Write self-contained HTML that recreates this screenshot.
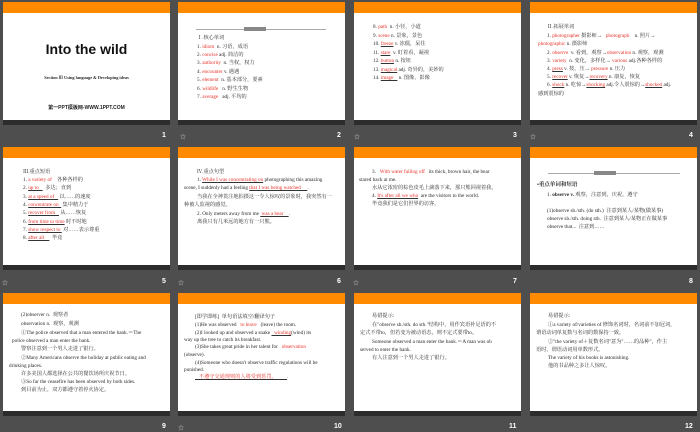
<!DOCTYPE html>
<html><head><meta charset="utf-8"><style>
*{margin:0;padding:0;box-sizing:border-box}
body{width:700px;height:430px;background:#4e4e4e;position:relative;overflow:hidden;font-family:"Liberation Serif","Noto Serif CJK SC",serif;}
.s{position:absolute;width:167px;height:123px;background:#fff;overflow:hidden}
.s .o{position:absolute;left:0;top:0;width:100%;height:11px;background:#ff8a00}
.s .d{position:absolute;left:0;bottom:0;width:100%;height:5px;background:#2c2c2c}
.l{position:absolute;font-size:5.2px;line-height:6px;color:#2a2a2a;white-space:nowrap}
.r{color:#e8332a}
.u{color:#e8332a;text-decoration:underline;text-decoration-color:#333}
.n{position:absolute;color:#fff;font:bold 7px "Liberation Sans",sans-serif}
.ic{position:absolute;color:#ccc;font-size:6px}
.hd{position:absolute;height:1px;background:#aaa}
.hb{position:absolute;height:4px;width:22px;background:#888}
</style></head><body>

<!-- Slide 1 -->
<div class="s" style="left:3px;top:2px"><div class="o"></div><div class="d"></div>
<div class="l" style="left:0;width:167px;text-align:center;top:39px;font:bold 14px/16px 'Liberation Sans',sans-serif;color:#111">Into the wild</div>
<div class="l" style="left:0;width:167px;text-align:center;top:73px;font-weight:bold;font-size:4.3px">Section Ⅲ Using language &amp; Developing ideas</div>
<div class="l" style="left:0;width:167px;text-align:center;top:102px;font:bold 5px 'Liberation Sans','Noto Sans CJK SC',sans-serif;color:#222">第一PPT模板网-WWW.1PPT.COM</div>
</div>
<div class="n" style="left:162px;top:132px">1</div>

<!-- Slide 2 -->
<div class="s" style="left:178px;top:2px"><div class="o"></div><div class="d"></div>
<div class="hd" style="left:18px;top:27px;width:130px"></div><div class="hb" style="left:66px;top:25px"></div>
<div class="l" style="left:19px;top:33px">Ⅰ.核心单词</div>
<div class="l" style="left:19px;top:42px">1. <span class="r">idiom</span> &nbsp;n. 习语，成语</div>
<div class="l" style="left:19px;top:50px">2. <span class="r">concise</span> adj. 简洁的</div>
<div class="l" style="left:19px;top:58px">3. <span class="r">authority</span> &nbsp;n. 当权，权力</div>
<div class="l" style="left:19px;top:67px">4. <span class="r">encounter</span> v. 遇遇</div>
<div class="l" style="left:19px;top:75px">5. <span class="r">element</span> &nbsp;n. 基本部分，要素</div>
<div class="l" style="left:19px;top:84px">6. <span class="r">wildlife</span> &nbsp;&nbsp;n. 野生生物</div>
<div class="l" style="left:19px;top:92px">7. <span class="r">average</span> &nbsp;&nbsp;adj. 平均的</div>
</div>
<div class="ic" style="left:180px;top:132px">☆</div><div class="n" style="left:337px;top:132px">2</div>

<!-- Slide 3 -->
<div class="s" style="left:354px;top:2px"><div class="o"></div><div class="d"></div>
<div class="l" style="left:19px;top:22px">8. <span class="r">path</span> &nbsp;n. 小径，小道</div>
<div class="l" style="left:19px;top:31px">9. <span class="r">scene</span> n. 景象，景色</div>
<div class="l" style="left:19px;top:39px">10. <span class="u">freeze</span> v. 冻僵，呆住</div>
<div class="l" style="left:19px;top:48px">11. <span class="u">stare</span> &nbsp;v. 盯着看，凝视</div>
<div class="l" style="left:19px;top:56px">12. <span class="u">button</span> n. 按钮</div>
<div class="l" style="left:19px;top:65px">13. <span class="u">magical</span> adj. 奇异的，美妙的</div>
<div class="l" style="left:19px;top:73px">14. <span class="u">image&nbsp;&nbsp;&nbsp;</span> n. 图像，影像</div>
</div>
<div class="ic" style="left:354px;top:132px">☆</div><div class="n" style="left:513px;top:132px">3</div>

<!-- Slide 4 -->
<div class="s" style="left:530px;top:2px"><div class="o"></div><div class="d"></div>
<div class="l" style="left:17px;top:22px">Ⅱ.拓展单词</div>
<div class="l" style="left:17px;top:31px">1. <span class="r">photographer</span> 摄影师→ &nbsp;&nbsp;<span class="r">photograph</span> &nbsp;&nbsp;&nbsp;n. 照片→</div>
<div class="l" style="left:8px;top:39px"><span class="r">photographic</span> n. 摄影师</div>
<div class="l" style="left:17px;top:48px">2. <span class="r">observe</span> &nbsp;v. 看到，观察→<span class="r">observation</span> n. 观察，观测</div>
<div class="l" style="left:17px;top:56px">3. <span class="r">variety</span> &nbsp;n. 变化，多样化→ <span class="r">various</span> adj.各种各样的</div>
<div class="l" style="left:17px;top:64px">4. <span class="u">press</span> v. 按，压→ <span class="r">pressure</span> n. 压力</div>
<div class="l" style="left:17px;top:72px">5. <span class="u">recover</span> v. 恢复→<span class="u">recovery</span> n. 康复，恢复</div>
<div class="l" style="left:17px;top:80px">6. <span class="u">shock</span> n. 吃惊→<span class="u">shocking</span> adj.令人震惊的→<span class="u">shocked</span> adj.</div>
<div class="l" style="left:8px;top:89px">感到震惊的</div>
</div>
<div class="ic" style="left:530px;top:132px">☆</div><div class="n" style="left:689px;top:132px">4</div>

<!-- Slide 5 -->
<div class="s" style="left:3px;top:147px"><div class="o"></div><div class="d"></div>
<div class="l" style="left:20px;top:22px">Ⅲ.重点短语</div>
<div class="l" style="left:20px;top:30px">1. <span class="r">a variety of</span> &nbsp;&nbsp;&nbsp;各种各样的</div>
<div class="l" style="left:20px;top:38px">2. <span class="u">up to&nbsp;&nbsp;&nbsp;</span> &nbsp;多达；直到</div>
<div class="l" style="left:20px;top:47px">3. <span class="u">at a speed of&nbsp;&nbsp;&nbsp;</span> 以……的速度</div>
<div class="l" style="left:20px;top:55px">4. <span class="u">concentrate on&nbsp;&nbsp;</span> 集中精力于</div>
<div class="l" style="left:20px;top:63px">5. <span class="u">recover from&nbsp;&nbsp;&nbsp;</span> 从……恢复</div>
<div class="l" style="left:20px;top:72px">6. <span class="u">from time to time</span> 时不时地</div>
<div class="l" style="left:20px;top:80px">7. <span class="u">show respect to&nbsp;</span> 对……表示尊重</div>
<div class="l" style="left:20px;top:88px">8. <span class="u">after all&nbsp;&nbsp;&nbsp;&nbsp;</span> &nbsp;毕竟</div>
</div>
<div class="ic" style="left:2px;top:278px">☆</div><div class="n" style="left:162px;top:278px">5</div>

<!-- Slide 6 -->
<div class="s" style="left:178px;top:147px"><div class="o"></div><div class="d"></div>
<div class="l" style="left:19px;top:22px">Ⅳ.重点句型</div>
<div class="l" style="left:19px;top:30px">1. <span class="u">While I was concentrating on</span> photographing this amazing</div>
<div class="l" style="left:6px;top:38px">scene, I suddenly had a feeling <span class="u">that I was being watched&nbsp;&nbsp;&nbsp;&nbsp;&nbsp;</span>.</div>
<div class="l" style="left:19px;top:47px">当我在全神贯注地拍摄这一令人惊叹的景象时，我突然有一</div>
<div class="l" style="left:6px;top:55px">种被人监视的感觉。</div>
<div class="l" style="left:19px;top:64px">2. Only meters away from me <span class="u">&nbsp;was a bear&nbsp;&nbsp;&nbsp;&nbsp;</span>.</div>
<div class="l" style="left:19px;top:72px">离我只有几米远的地方有一只熊。</div>
</div>
<div class="ic" style="left:178px;top:278px">☆</div><div class="n" style="left:337px;top:278px">6</div>

<!-- Slide 7 -->
<div class="s" style="left:354px;top:147px"><div class="o"></div><div class="d"></div>
<div class="l" style="left:18px;top:22px">3. &nbsp;&nbsp;<span class="r">With water falling off</span> &nbsp;&nbsp;its thick, brown hair, the bear</div>
<div class="l" style="left:5px;top:30px">stared back at me.</div>
<div class="l" style="left:18px;top:38px">水从它浓密的棕色皮毛上滴落下来，那只熊回视着我。</div>
<div class="l" style="left:18px;top:46px">4. <span class="u">It's after all we who</span> &nbsp;are the visitors to the world.</div>
<div class="l" style="left:18px;top:54px">毕竟我们是它们世界的访客。</div>
</div>
<div class="ic" style="left:353px;top:278px">☆</div><div class="n" style="left:513px;top:278px">7</div>

<!-- Slide 8 -->
<div class="s" style="left:530px;top:147px"><div class="o"></div><div class="d"></div>
<div class="hd" style="left:18px;top:26px;width:132px"></div><div class="hb" style="left:64px;top:24px"></div>
<div class="l" style="left:7px;top:35px;font-weight:bold;font-size:5.5px">•重点单词和短语</div>
<div class="l" style="left:17px;top:45px">1. <b>observe v.</b> 观察，注意到，庆祝，遵守</div>
<div class="l" style="left:17px;top:61px">(1)observe sb./sth. (do sth.) &nbsp;注意到某人/某物(做某事)</div>
<div class="l" style="left:17px;top:69px">observe sb./sth. doing sth. &nbsp;注意到某人/某物正在做某事</div>
<div class="l" style="left:17px;top:77px">observe that... &nbsp;注意到……</div>
</div>
<div class="n" style="left:689px;top:278px">8</div>

<!-- Slide 9 -->
<div class="s" style="left:3px;top:293px"><div class="o"></div><div class="d"></div>
<div class="l" style="left:18px;top:19px">(2)observer n. &nbsp;观察者</div>
<div class="l" style="left:18px;top:28px">observation n. &nbsp;观察，观测</div>
<div class="l" style="left:18px;top:37px">①The police observed that a man entered the bank.＝The</div>
<div class="l" style="left:9px;top:45px">police observed a man enter the bank.</div>
<div class="l" style="left:18px;top:53px">警察注意到一个男人走进了银行。</div>
<div class="l" style="left:18px;top:62px">②Many Americans observe the holiday at public eating and</div>
<div class="l" style="left:6px;top:70px">drinking places.</div>
<div class="l" style="left:18px;top:78px">许多美国人都选择在公共的餐饮场所庆祝节日。</div>
<div class="l" style="left:18px;top:86px">③So far the ceasefire has been observed by both sides.</div>
<div class="l" style="left:18px;top:94px">到目前为止，双方都遵守着停火协定。</div>
</div>
<div class="n" style="left:162px;top:423px">9</div>

<!-- Slide 10 -->
<div class="s" style="left:178px;top:293px"><div class="o"></div><div class="d"></div>
<div class="l" style="left:17px;top:21px">[即学即练] &nbsp;单句语法填空/翻译句子</div>
<div class="l" style="left:17px;top:29px">(1)He was observed &nbsp;&nbsp;<span class="r">to leave</span> &nbsp;&nbsp;(leave) the room.</div>
<div class="l" style="left:17px;top:37px">(2)I looked up and observed a snake <span class="u">&nbsp;&nbsp;winding</span>(wind) its</div>
<div class="l" style="left:6px;top:44px">way up the tree to catch its breakfast.</div>
<div class="l" style="left:17px;top:51px">(3)She takes great pride in her talent for &nbsp;&nbsp;<span class="r">observation</span></div>
<div class="l" style="left:6px;top:59px">(observe).</div>
<div class="l" style="left:17px;top:67px">(4)Someone who doesn't observe traffic regulations will be</div>
<div class="l" style="left:6px;top:74px">punished.</div>
<div class="l" style="left:17px;top:81px"><span class="u">&nbsp;&nbsp;&nbsp;不遵守交通规则的人将受到惩罚。&nbsp;&nbsp;&nbsp;&nbsp;&nbsp;&nbsp;&nbsp;&nbsp;</span>.</div>
</div>
<div class="ic" style="left:178px;top:423px">☆</div><div class="n" style="left:334px;top:423px">10</div>

<!-- Slide 11 -->
<div class="s" style="left:354px;top:293px"><div class="o"></div><div class="d"></div>
<div class="l" style="left:18px;top:20px">易错提示:</div>
<div class="l" style="left:18px;top:29px">在"observe sb./sth. do sth."结构中，用作宾语补足语的不</div>
<div class="l" style="left:6px;top:37px">定式不带to，但若变为被动语态，则不定式要带to。</div>
<div class="l" style="left:18px;top:46px">Someone observed a man enter the bank.＝A man was ob</div>
<div class="l" style="left:6px;top:54px">served to enter the bank.</div>
<div class="l" style="left:18px;top:62px">有人注意到一个男人走进了银行。</div>
</div>
<div class="n" style="left:509px;top:423px">11</div>

<!-- Slide 12 -->
<div class="s" style="left:530px;top:293px"><div class="o"></div><div class="d"></div>
<div class="l" style="left:18px;top:20px">易错提示:</div>
<div class="l" style="left:18px;top:29px">①a variety of/varieties of 修饰名词时，名词前不加冠词，</div>
<div class="l" style="left:6px;top:37px">谓语动词单复数与名词的数保持一致。</div>
<div class="l" style="left:18px;top:46px">②"the variety of＋复数名词"意为"……的品种"，作主</div>
<div class="l" style="left:6px;top:54px">语时，谓语动词用单数形式。</div>
<div class="l" style="left:18px;top:62px">The variety of his books is astonishing.</div>
<div class="l" style="left:18px;top:70px">他的书品种之多让人惊叹。</div>
</div>
<div class="n" style="left:685px;top:423px">12</div>

</body></html>
